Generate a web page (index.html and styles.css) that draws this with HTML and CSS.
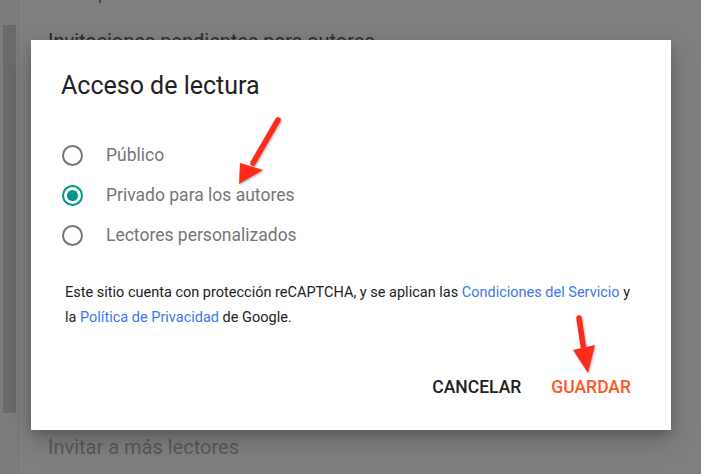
FILE: index.html
```html
<!DOCTYPE html>
<html lang="es">
<head>
<meta charset="utf-8">
<link rel="stylesheet" href="styles.css">
</head>
<body>
<div class="page">
  <div class="rail"><div class="thumb"></div></div>
  <div class="content">
    <div class="top-line"><span class="descender"></span></div>
    <div class="section-title">Invitaciones pendientes para autores</div>
    <div class="spacer"></div>
    <div class="section-link">Invitar a más lectores</div>
  </div>
</div>

<div class="dialog">
  <h1 class="title">Acceso de lectura</h1>
  <div class="options">
    <label class="option"><span class="radio"></span><span class="label">Público</span></label>
    <label class="option"><span class="radio checked"></span><span class="label">Privado para los autores</span></label>
    <label class="option"><span class="radio"></span><span class="label">Lectores personalizados</span></label>
  </div>
  <div class="notice">
    <div class="notice-line">Este sitio cuenta con protección reCAPTCHA, y se aplican las <a href="#">Condiciones del Servicio</a> y</div>
    <div class="notice-line">la <a href="#">Política de Privacidad</a> de Google.</div>
  </div>
  <div class="actions">
    <button class="btn">CANCELAR</button>
    <button class="btn primary">GUARDAR</button>
  </div>
</div>

<svg class="arrow arrow-one" width="80" height="90" viewBox="0 0 80 90">
  <line x1="56" y1="7" x2="31" y2="50" class="shaft"/>
  <polygon points="17,71 18,50 41,57" class="head"/>
</svg>
<svg class="arrow arrow-two" width="40" height="80" viewBox="0 0 40 80">
  <line x1="19" y1="7" x2="24" y2="40" class="shaft"/>
  <polygon points="28,62 13,39 35,34" class="head"/>
</svg>
</body>
</html>
```
FILE: styles.css
```css
html, body {
  margin: 0;
  padding: 0;
}
body {
  width: 701px;
  height: 474px;
  overflow: hidden;
  background: #7f7f7f;
  font-family: Roboto, "Liberation Sans", sans-serif;
  position: relative;
}
.page {
  display: flex;
  height: 474px;
}
.rail {
  width: 18px;
  background: #7c7c7c;
  border-right: 1px solid #767676;
}
.thumb {
  margin: 25px 0 0 3px;
  width: 13px;
  height: 388px;
  background: #6a6a6a;
}
.content {
  flex: 1;
  display: flex;
  flex-direction: column;
  padding-left: 29px;
}
.top-line {
  height: 4px;
  padding-left: 51px;
}
.descender {
  display: block;
  width: 2px;
  height: 3px;
  background: #444;
}
.section-title {
  margin-top: 25px;
  font-size: 20px;
  line-height: 24px;
  color: #2c2c2c;
}
.spacer { flex: 1; }
.section-link {
  font-size: 20px;
  line-height: 24px;
  color: #585858;
  margin-bottom: 15px;
}

.dialog {
  position: absolute;
  left: 31px;
  top: 40px;
  width: 640px;
  height: 390px;
  box-sizing: border-box;
  background: #fff;
  box-shadow: 0 10px 24px rgba(0,0,0,0.22), 0 4px 8px rgba(0,0,0,0.12);
  padding: 30px 30px 0 30px;
  display: flex;
  flex-direction: column;
}
.title {
  margin: 0;
  font-size: 25px;
  line-height: 32px;
  font-weight: 400;
  color: #212121;
}
.options {
  margin-top: 33px;
  display: flex;
  flex-direction: column;
}
.option {
  height: 40px;
  display: flex;
  align-items: center;
}
.radio {
  width: 21px;
  height: 21px;
  box-sizing: border-box;
  border: 2px solid #737373;
  border-radius: 50%;
  display: flex;
  align-items: center;
  justify-content: center;
  margin-left: 1px;
}
.radio.checked {
  border-color: #009688;
}
.radio.checked::after {
  content: "";
  width: 11px;
  height: 11px;
  border-radius: 50%;
  background: #009688;
}
.label {
  margin-left: 23px;
  font-size: 17.5px;
  color: #757575;
}
.notice {
  margin: 25px 0 0 4px;
  font-size: 14.5px;
  line-height: 25px;
  color: #212121;
  white-space: nowrap;
}
.notice a {
  color: #3b78e7;
  text-decoration: none;
}
.actions {
  margin-top: auto;
  margin-bottom: 25px;
  display: flex;
  justify-content: flex-end;
  gap: 14px;
  padding-right: 2px;
}
.btn {
  border: none;
  background: none;
  font-family: Roboto, "Liberation Sans", sans-serif;
  font-size: 17.5px;
  font-weight: 500;
  color: #212121;
  padding: 8px 8px;
  line-height: 20px;
}
.btn.primary {
  color: #ff5722;
}
.arrow {
  position: absolute;
  filter: drop-shadow(1px 1px 1px rgba(0,0,0,0.3));
}
.arrow .shaft {
  stroke: #ff2a1a;
  stroke-width: 5.5;
  stroke-linecap: round;
}
.arrow .head {
  fill: #ff2a1a;
}
.arrow-one {
  left: 222px;
  top: 113px;
}
.arrow-two {
  left: 560px;
  top: 311px;
}
```
